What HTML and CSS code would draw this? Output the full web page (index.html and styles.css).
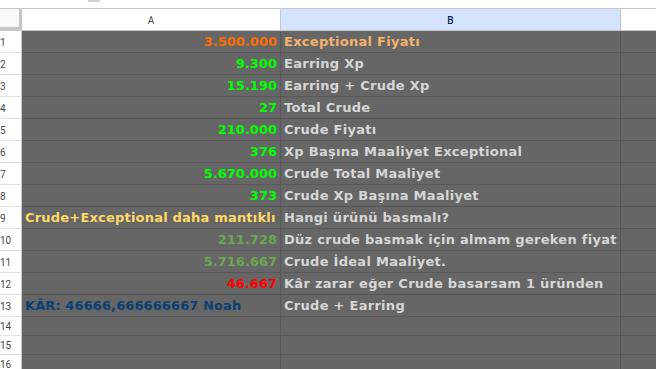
FILE: index.html
```html
<!DOCTYPE html>
<html lang="tr">
<head>
<meta charset="utf-8">
<link rel="stylesheet" href="styles.css">
</head>
<body>
<div class="topbar"><span class="smudge"></span></div>
<div class="sheet">
  <div class="corner"></div>
  <div class="colhead">A</div>
  <div class="colhead sel">B</div>
  <div class="colhead last"></div>

  <div class="rh">1</div><div class="c num orange">3.500.000</div><div class="c txt peach">Exceptional Fiyatı</div><div class="c e"></div>
  <div class="rh">2</div><div class="c num lime">9.300</div><div class="c txt">Earring Xp</div><div class="c e"></div>
  <div class="rh">3</div><div class="c num lime">15.190</div><div class="c txt">Earring + Crude Xp</div><div class="c e"></div>
  <div class="rh">4</div><div class="c num lime">27</div><div class="c txt">Total Crude</div><div class="c e"></div>
  <div class="rh">5</div><div class="c num lime">210.000</div><div class="c txt">Crude Fiyatı</div><div class="c e"></div>
  <div class="rh">6</div><div class="c num lime">376</div><div class="c txt">Xp Başına Maaliyet Exceptional</div><div class="c e"></div>
  <div class="rh">7</div><div class="c num lime">5.670.000</div><div class="c txt">Crude Total Maaliyet</div><div class="c e"></div>
  <div class="rh">8</div><div class="c num lime">373</div><div class="c txt">Crude Xp Başına Maaliyet</div><div class="c e"></div>
  <div class="rh">9</div><div class="c txt yellow">Crude+Exceptional daha mantıklı</div><div class="c txt">Hangi ürünü basmalı?</div><div class="c e"></div>
  <div class="rh">10</div><div class="c num green">211.728</div><div class="c txt">Düz crude basmak için almam gereken fiyat</div><div class="c e"></div>
  <div class="rh">11</div><div class="c num green">5.716.667</div><div class="c txt">Crude İdeal Maaliyet.</div><div class="c e"></div>
  <div class="rh">12</div><div class="c num red">46.667</div><div class="c txt">Kâr zarar eğer Crude basarsam 1 üründen</div><div class="c e"></div>
  <div class="rh">13</div><div class="c txt navy">KÂR: 46666,666666667 Noah</div><div class="c txt">Crude + Earring</div><div class="c e"></div>
  <div class="rh">14</div><div class="c"></div><div class="c"></div><div class="c e"></div>
  <div class="rh">15</div><div class="c"></div><div class="c"></div><div class="c e"></div>
  <div class="rh">16</div><div class="c"></div><div class="c"></div><div class="c e"></div>
</div>
</body>
</html>
```

FILE: styles.css
```css
html, body {
  margin: 0;
  padding: 0;
  background: #ffffff;
  overflow: hidden;
}
.topbar {
  height: 8px;
  border-bottom: 1px solid #c7c7c7;
}
.smudge {
  display: block;
  margin-left: 88px;
  width: 12px;
  height: 2px;
  background: #d0d0d0;
}
.sheet {
  display: grid;
  grid-template-columns: 22px 259px 340px 1fr;
  grid-template-rows: repeat(14, 22px) repeat(3, 19px);
  font-family: "DejaVu Sans", sans-serif;
}
.corner {
  background: #f8f9fa;
  border-right: 3px solid #c4c7c5;
  border-bottom: 4px solid #c4c7c5;
}
.colhead {
  border-right: 1px solid #c4c7c5;
  border-bottom: 1px solid #c4c7c5;
  display: flex;
  align-items: center;
  justify-content: center;
  font-family: "Roboto", "Liberation Sans", sans-serif;
  font-size: 10px;
  color: #444746;
  background: #ffffff;
  padding-top: 1px;
}
.colhead.sel {
  background: #d3e3fd;
  color: #0b1d4f;
  font-weight: 500;
}
.colhead.last {
  border-right: none;
}
.rh {
  border-right: 1px solid #c4c7c5;
  border-bottom: 1px solid #e1e1e1;
  font-family: "Roboto", "Liberation Sans", sans-serif;
  font-size: 10px;
  color: #444746;
  display: flex;
  align-items: center;
  justify-content: flex-start;
  padding-left: 0;
  padding-top: 1px;
  overflow: hidden;
}
.c {
  background: #666666;
  border-right: 1px solid #585858;
  border-bottom: 1px solid #585858;
  display: flex;
  align-items: flex-end;
  padding-bottom: 3px;
  font-size: 13px;
  font-weight: 700;
  white-space: nowrap;
  overflow: hidden;
}
.c.e { border-right: none; }
.num {
  justify-content: flex-end;
  padding-right: 3px;
}
.txt {
  justify-content: flex-start;
  padding-left: 3px;
  color: #d6d6d6;
  letter-spacing: 0.28px;
}
.orange { color: #ff6d01; }
.peach { color: #f6b26b; }
.lime { color: #00ff00; }
.green { color: #6aa84f; }
.red { color: #ff0000; }
.yellow { color: #ffd966; letter-spacing: 0.2px; }
.navy { color: #0b3f73; letter-spacing: 0.1px; }
```
